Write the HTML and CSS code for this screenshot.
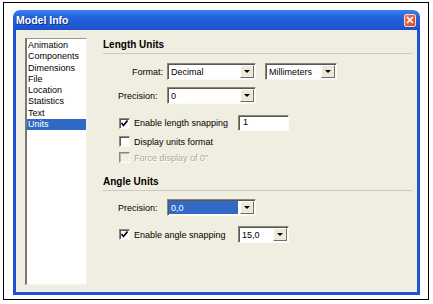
FILE: index.html
```html
<!DOCTYPE html>
<html lang="en">
<head>
    <meta charset="UTF-8">
    <meta name="viewport" content="width=device-width, initial-scale=1.0">
    <title>Model Info</title>
    <link rel="stylesheet" href="styles.css">
</head>
<body>
    <div class="frame">
        <div class="window">
            <div class="titlebar">
                <span class="title">Model Info</span>
                <span class="close">
                    <svg width="8" height="8" viewBox="0 0 8 8"><path d="M1 1 L7 7 M7 1 L1 7" stroke="#fff" stroke-width="1.6"/></svg>
                </span>
            </div>
            <div class="client">
                <ul class="nav">
                    <li>Animation</li>
                    <li>Components</li>
                    <li>Dimensions</li>
                    <li>File</li>
                    <li>Location</li>
                    <li>Statistics</li>
                    <li>Text</li>
                    <li class="selected">Units</li>
                </ul>

                <div class="pane">
                    <div class="section-title">Length Units</div>

                    <div class="row row-format">
                        <span class="fld-label fld-label-right">Format:</span>
                        <div class="combo combo-wide"><span class="combo-text">Decimal</span><span class="combo-btn"></span></div>
                        <div class="combo combo-unit"><span class="combo-text">Millimeters</span><span class="combo-btn"></span></div>
                    </div>

                    <div class="row row-precision">
                        <span class="fld-label">Precision:</span>
                        <div class="combo combo-wide"><span class="combo-text">0</span><span class="combo-btn"></span></div>
                    </div>

                    <div class="row row-snap">
                        <span class="check">
                            <svg width="9" height="9" viewBox="0 0 9 9"><path d="M1.5 4 L3.5 6.5 L7.5 1.5" fill="none" stroke="#000" stroke-width="1.7"/></svg>
                        </span>
                        <span class="check-text">Enable length snapping</span>
                        <div class="textbox">1</div>
                    </div>

                    <div class="row row-check">
                        <span class="check"></span>
                        <span class="check-text">Display units format</span>
                    </div>

                    <div class="row row-check row-disabled">
                        <span class="check"></span>
                        <span class="check-text">Force display of 0"</span>
                    </div>

                    <div class="section-title section-angle">Angle Units</div>

                    <div class="row row-angle">
                        <span class="fld-label">Precision:</span>
                        <div class="combo combo-wide combo-active"><span class="combo-text">0,0</span><span class="combo-btn"></span></div>
                    </div>

                    <div class="row row-angle-snap">
                        <span class="check">
                            <svg width="9" height="9" viewBox="0 0 9 9"><path d="M1.5 4 L3.5 6.5 L7.5 1.5" fill="none" stroke="#000" stroke-width="1.7"/></svg>
                        </span>
                        <span class="check-text">Enable angle snapping</span>
                        <div class="combo combo-small"><span class="combo-text">15,0</span><span class="combo-btn"></span></div>
                    </div>
                </div>
            </div>
        </div>
    </div>
</body>
</html>
```

FILE: styles.css
```css
body {
    margin: 0;
    background-color: #fff;
    font-family: "Liberation Sans", Arial, sans-serif;
    font-size: 9px;
    color: #000;
}

.frame {
    box-sizing: border-box;
    width: 426px;
    height: 298px;
    margin: 2px 0 0 3px;
    padding: 7px 0 0 9px;
    border: 1px solid #000;
}

.window {
    display: flex;
    flex-direction: column;
    width: 407px;
    height: 285px;
}

.titlebar {
    display: flex;
    align-items: center;
    justify-content: space-between;
    height: 20px;
    padding: 0 4px 0 3px;
    border-radius: 7px 7px 0 0;
    background: linear-gradient(#3d82f2, #2462dc 35%, #1f58d4 80%, #1a4fc6);
}

.title {
    font-size: 10.5px;
    font-weight: bold;
    color: #fff;
    text-shadow: 1px 1px #0d2f8a;
}

.close {
    display: flex;
    align-items: center;
    justify-content: center;
    box-sizing: border-box;
    width: 12px;
    height: 13px;
    border: 1px solid #f4d7cc;
    border-radius: 2px;
    background: linear-gradient(135deg, #ef7a58, #d9431f);
}

.client {
    flex: 1;
    display: flex;
    padding: 8px 5px 7px 9px;
    border: 3px solid #1f53d2;
    border-top: none;
    background-color: #f0eee0;
}

.nav {
    box-sizing: border-box;
    width: 62px;
    margin: 0;
    padding: 1px 0 0 0;
    list-style: none;
    background-color: #fff;
    border-top: 1px solid #9a9890;
    border-left: 2px solid #7a7870;
    border-right: 1px solid #f4f3ee;
    border-bottom: 1px solid #f4f3ee;
}

.nav li {
    height: 11.3px;
    line-height: 11.3px;
    padding-left: 1px;
    white-space: nowrap;
}

.nav li.selected {
    background-color: #316ac5;
    color: #fff;
}

.pane {
    flex: 1;
    margin-left: 16px;
}

.section-title {
    margin-top: 1px;
    padding-bottom: 2px;
    font-size: 10px;
    font-weight: bold;
    line-height: 12px;
    border-bottom: 1px solid #d6c4c4;
}

.section-angle {
    margin-top: 13px;
}

.row {
    display: flex;
    align-items: center;
}

.row-format {
    height: 17px;
    margin-top: 9px;
    padding-left: 15px;
}

.row-precision {
    height: 17px;
    margin-top: 7px;
    padding-left: 15px;
}

.row-snap {
    height: 16px;
    margin-top: 11px;
    padding-left: 16px;
}

.row-check {
    height: 11px;
    margin-top: 5px;
    padding-left: 16px;
}

.row-angle {
    height: 17px;
    margin-top: 8px;
    padding-left: 15px;
}

.row-angle-snap {
    height: 17px;
    margin-top: 10px;
    padding-left: 16px;
}

.fld-label {
    width: 49px;
    white-space: nowrap;
}

.fld-label-right {
    box-sizing: border-box;
    padding-right: 4px;
    text-align: right;
}

.combo {
    box-sizing: border-box;
    display: flex;
    align-items: center;
    height: 17px;
    padding: 1px;
    background-color: #fff;
    border: 1px solid;
    border-color: #8a877c #fbfaf6 #fbfaf6 #8a877c;
    box-shadow: inset 1px 1px #5a5850;
}

.combo-wide {
    width: 89px;
}

.combo-unit {
    width: 72px;
    margin-left: 9px;
}

.combo-small {
    width: 51px;
}

.combo-text {
    flex: 1;
    align-self: stretch;
    display: flex;
    align-items: center;
    padding-left: 2px;
    white-space: nowrap;
}

.combo-active .combo-text {
    margin-right: 2px;
    background-color: #316ac5;
    color: #fff;
}

.combo-btn {
    position: relative;
    box-sizing: border-box;
    width: 14px;
    height: 13px;
    background-color: #ece9d8;
    border: 1px solid;
    border-color: #fff #6f6d66 #6f6d66 #fff;
}

.combo-btn::after {
    content: "";
    position: absolute;
    left: 3px;
    top: 4px;
    border-left: 3px solid transparent;
    border-right: 3px solid transparent;
    border-top: 3px solid #000;
}

.check {
    box-sizing: border-box;
    display: flex;
    align-items: center;
    justify-content: center;
    width: 11px;
    height: 11px;
    background-color: #fff;
    border: 1px solid;
    border-color: #8a877c #fbfaf6 #fbfaf6 #8a877c;
    box-shadow: inset 1px 1px #5a5850;
}

.check-text {
    width: 104px;
    margin-left: 4px;
    white-space: nowrap;
}

.row-disabled .check {
    box-shadow: inset 1px 1px #b8b5a8;
    background-color: #f1efe4;
}

.row-disabled .check-text {
    color: #aca899;
    text-shadow: 1px 1px #fff;
}

.textbox {
    box-sizing: border-box;
    width: 51px;
    height: 16px;
    padding-left: 4px;
    line-height: 13px;
    background-color: #fff;
    border: 1px solid;
    border-color: #8a877c #fbfaf6 #fbfaf6 #8a877c;
    box-shadow: inset 1px 1px #5a5850;
}
```
